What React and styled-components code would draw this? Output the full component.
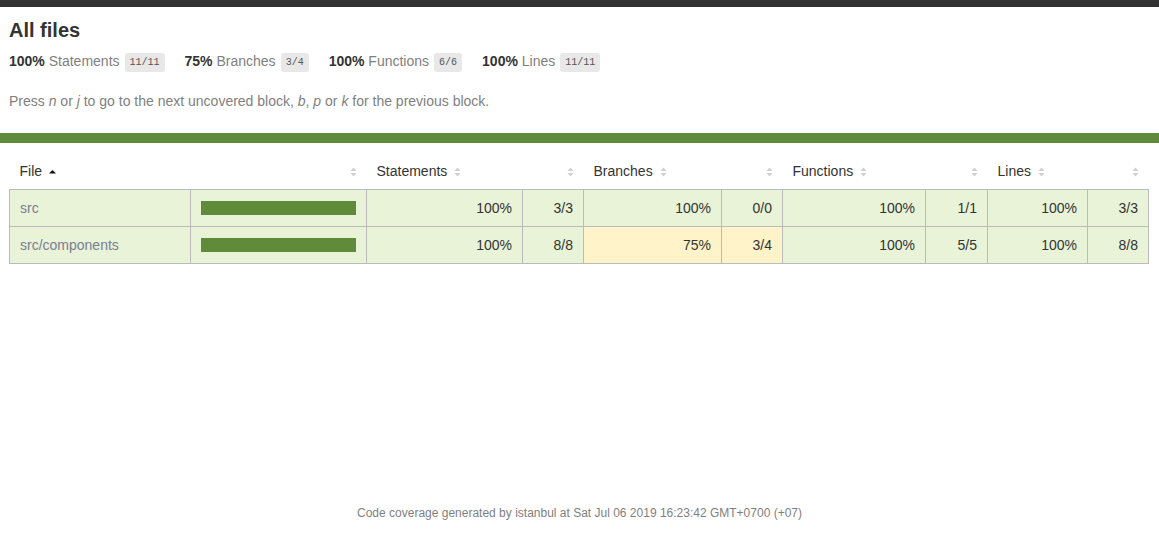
import React from 'react'
import styled, { createGlobalStyle } from 'styled-components'

const GlobalStyle = createGlobalStyle`
  html, body {
    margin: 0;
    padding: 0;
    height: 100%;
  }
  body {
    font-family: "Liberation Sans", Arial, Helvetica, sans-serif;
    font-size: 14px;
    color: #333;
    background: #fff;
  }
  #root {
    min-height: 100%;
  }
`

const GREEN = '#5f8b3a'

const summary = [
  { pct: '100%', label: 'Statements', frac: '11/11' },
  { pct: '75%', label: 'Branches', frac: '3/4' },
  { pct: '100%', label: 'Functions', frac: '6/6' },
  { pct: '100%', label: 'Lines', frac: '11/11' },
]

const rows = [
  {
    file: 'src',
    cells: [
      { pct: '100%', abs: '3/3', level: 'high' },
      { pct: '100%', abs: '0/0', level: 'high' },
      { pct: '100%', abs: '1/1', level: 'high' },
      { pct: '100%', abs: '3/3', level: 'high' },
    ],
  },
  {
    file: 'src/components',
    cells: [
      { pct: '100%', abs: '8/8', level: 'high' },
      { pct: '75%', abs: '3/4', level: 'medium' },
      { pct: '100%', abs: '5/5', level: 'high' },
      { pct: '100%', abs: '8/8', level: 'high' },
    ],
  },
]

// column widths measured from the report: [pct, abs]
const columns = [
  { title: 'Statements', pct: 156, abs: 61 },
  { title: 'Branches', pct: 138, abs: 61 },
  { title: 'Functions', pct: 143, abs: 62 },
  { title: 'Lines', pct: 100, abs: 61 },
]

const Sorter = ({ sorted }) => (
  <SorterIcon viewBox="0 0 7 10" width="7" height="10">
    {sorted ? (
      <polygon points="3.5,3 7,6.5 0,6.5" fill="#111" />
    ) : (
      <>
        <polygon points="3.5,0.5 6.5,4 0.5,4" fill="#cfcfcf" />
        <polygon points="0.5,6 6.5,6 3.5,9.5" fill="#cfcfcf" />
      </>
    )}
  </SorterIcon>
)

const App = () => {
  return (
    <Page>
      <GlobalStyle />
      <TopFrame />
      <Wrapper>
        <Pad>
          <Title>All files</Title>
          <SummaryRow>
            {summary.map((s) => (
              <SummaryItem key={s.label}>
                <Strong>{s.pct} </Strong>
                <Quiet>{s.label}</Quiet>
                <Fraction>{s.frac}</Fraction>
              </SummaryItem>
            ))}
          </SummaryRow>
          <Hint>
            Press <em>n</em> or <em>j</em> to go to the next uncovered block, <em>b</em>, <em>p</em> or <em>k</em> for the previous block.
          </Hint>
        </Pad>
        <StatusLine />
        <TablePad>
          <Coverage>
            <colgroup>
              <col style={{ width: 181 }} />
              <col style={{ width: 176 }} />
              {columns.map((c) => (
                <React.Fragment key={c.title}>
                  <col style={{ width: c.pct }} />
                  <col style={{ width: c.abs }} />
                </React.Fragment>
              ))}
            </colgroup>
            <thead>
              <tr>
                <Th>File<Sorter sorted /></Th>
                <Th $right><Sorter /></Th>
                {columns.map((c) => (
                  <React.Fragment key={c.title}>
                    <Th>{c.title}<Sorter /></Th>
                    <Th $right><Sorter /></Th>
                  </React.Fragment>
                ))}
              </tr>
            </thead>
            <Body>
              {rows.map((r) => (
                <Row key={r.file}>
                  <FileCell><FileLink>{r.file}</FileLink></FileCell>
                  <Td $level="high">
                    <Chart><CoverFill style={{ width: '100%' }} /></Chart>
                  </Td>
                  {r.cells.map((c, i) => (
                    <React.Fragment key={i}>
                      <Td $level={c.level} $right>{c.pct}</Td>
                      <Td $level={c.level} $right>{c.abs}</Td>
                    </React.Fragment>
                  ))}
                </Row>
              ))}
            </Body>
          </Coverage>
        </TablePad>
      </Wrapper>
      <Footer>
        Code coverage generated by istanbul at Sat Jul 06 2019 16:23:42 GMT+0700 (+07)
      </Footer>
    </Page>
  )
}

const Page = styled.div`
  display: flex;
  flex-direction: column;
  min-height: 100vh;
`
const TopFrame = styled.div`
  height: 7px;
  background: #333;
`
const Wrapper = styled.div`
  flex: 1;
`
const Pad = styled.div`
  padding: 12px 10px 10px 9px;
`
const Title = styled.h1`
  font-size: 20px;
  margin: 0;
  font-weight: bold;
`
const SummaryRow = styled.div`
  display: flex;
  align-items: center;
  padding: 11px 0 10px;
`
const SummaryItem = styled.div`
  padding-right: 20px;
  white-space: pre;
`
const Strong = styled.span`
  font-weight: bold;
`
const Quiet = styled.span`
  color: #7f7f7f;
`
const Fraction = styled.span`
  font-family: "Liberation Mono", "DejaVu Sans Mono", monospace;
  font-size: 10px;
  color: #555;
  background: #e8e8e8;
  padding: 4px 5px;
  border-radius: 3px;
  vertical-align: middle;
  margin-left: 5px;
`
const Hint = styled.p`
  color: #7f7f7f;
  margin: 14px 0;
`
const StatusLine = styled.div`
  height: 10px;
  background: ${GREEN};
`
const TablePad = styled.div`
  padding: 10px 10px 10px 9px;
`
const Coverage = styled.table`
  border-collapse: collapse;
  width: 100%;
  table-layout: fixed;
`
const Th = styled.th`
  padding: 10px;
  font-weight: normal;
  white-space: nowrap;
  text-align: ${(p) => (p.$right ? 'right' : 'left')};
`
const SorterIcon = styled.svg`
  display: inline-block;
  margin-left: 7px;
  vertical-align: -1px;
`
const Body = styled.tbody`
  border: 1px solid #bbb;
`
const Row = styled.tr`
  border-bottom: 1px solid #bbb;
`
const Td = styled.td`
  padding: 10px;
  border-right: 1px solid #bbb;
  text-align: ${(p) => (p.$right ? 'right' : 'left')};
  background: ${(p) => (p.$level === 'medium' ? '#fff4c9' : '#e8f3d8')};
  &:last-child {
    border-right: none;
  }
`
const FileCell = styled(Td)`
  white-space: nowrap;
  background: #e8f3d8;
`
const FileLink = styled.a`
  color: #7b7d95;
  text-decoration: none;
`
const Chart = styled.div`
  line-height: 0;
  border: 1px solid ${GREEN};
`
const CoverFill = styled.div`
  display: inline-block;
  height: 12px;
  background: ${GREEN};
`
const Footer = styled.div`
  text-align: center;
  font-size: 12px;
  color: #7f7f7f;
  padding: 0 20px 15px;
`

export default App
